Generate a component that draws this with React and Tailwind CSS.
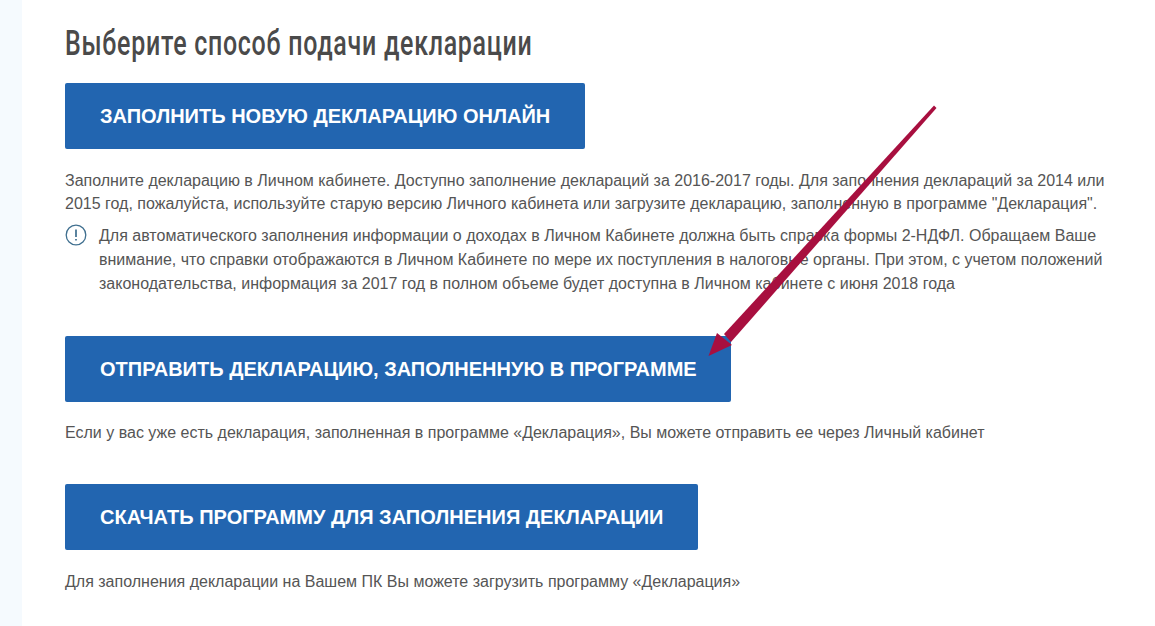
const FONT = 'font-["Liberation_Sans",Arial,sans-serif]'

function ActionButton({ width, children }) {
  return (
    <button className={`${width} h-[66px] bg-[#2265b0] rounded-[2px] pl-[35px] text-left text-white text-[20px] font-bold whitespace-nowrap`}>
      {children}
    </button>
  )
}

export default function App() {
  return (
    <div className={`relative h-[626px] w-[1155px] overflow-hidden flex bg-white text-[#555555] text-[16px] leading-[24px] ${FONT}`}>
      <div className="w-[22px] bg-[#f5fafe] shrink-0" />
      <div className="pl-[43px] flex-1">
        <h1 className='mt-[22px] h-[44px] text-[35px] leading-[44px] text-[#4a4a4a] font-["Roboto",sans-serif] font-medium origin-left scale-x-[0.714] whitespace-nowrap tracking-[1px]'>
          Выберите способ подачи декларации
        </h1>
        <div className="mt-[17px]">
          <ActionButton width="w-[520px]">ЗАПОЛНИТЬ НОВУЮ ДЕКЛАРАЦИЮ ОНЛАЙН</ActionButton>
        </div>
        <p className="mt-[20px] w-[1050px] leading-[23px]">
          Заполните декларацию в Личном кабинете. Доступно заполнение деклараций за 2016-2017 годы. Для заполнения деклараций за 2014 или 2015 год, пожалуйста, используйте старую версию Личного кабинета или загрузите декларацию, заполненную в программе "Декларация".
        </p>
        <div className="mt-[9px] flex">
          <svg className="w-[22px] h-[22px] shrink-0" viewBox="0 0 22 22" fill="none">
            <circle cx="11" cy="11" r="9.8" stroke="#3f6f8f" strokeWidth="1.3" />
            <path d="M11 5.5v7.5M11 15v1.6" stroke="#3f6f8f" strokeWidth="1.7" />
          </svg>
          <p className="ml-[12px] w-[1010px]">
            Для автоматического заполнения информации о доходах в Личном Кабинете должна быть справка формы 2-НДФЛ. Обращаем Ваше внимание, что справки отображаются в Личном Кабинете по мере их поступления в налоговые органы. При этом, с учетом положений законодательства, информация за 2017 год в полном объеме будет доступна в Личном кабинете с июня 2018 года
          </p>
        </div>
        <div className="mt-[40px]">
          <ActionButton width="w-[666px]">ОТПРАВИТЬ ДЕКЛАРАЦИЮ, ЗАПОЛНЕННУЮ В ПРОГРАММЕ</ActionButton>
        </div>
        <p className="mt-[19px]">
          Если у вас уже есть декларация, заполненная в программе «Декларация», Вы можете отправить ее через Личный кабинет
        </p>
        <div className="mt-[39px]">
          <ActionButton width="w-[633px]">СКАЧАТЬ ПРОГРАММУ ДЛЯ ЗАПОЛНЕНИЯ ДЕКЛАРАЦИИ</ActionButton>
        </div>
        <p className="mt-[20px]">
          Для заполнения декларации на Вашем ПК Вы можете загрузить программу «Декларация»
        </p>
      </div>
      {/* red arrow drawn over the page */}
      <svg className="absolute left-0 top-0 pointer-events-none" width="1155" height="626" fill="none">
        <path d="M934 105.500 L936.500 108 L731 342 L724 334 Z" fill="#a80f3f" />
        <path d="M708.500 356 L717 333 L732 345 Z" fill="#a80f3f" />
      </svg>
    </div>
  )
}
